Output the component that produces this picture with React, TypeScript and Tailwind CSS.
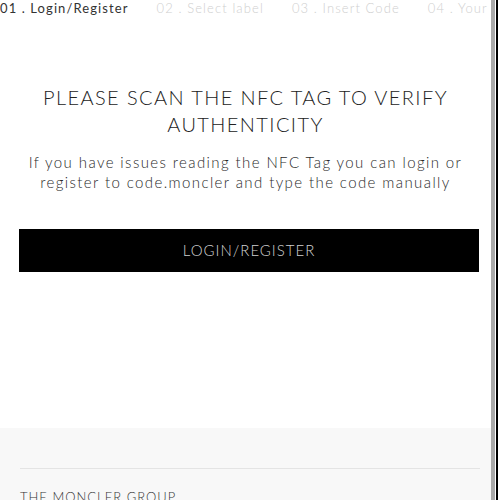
export default function App() {
  const steps = ['01 . Login/Register', '02 . Select label', '03 . Insert Code', '04 . Your code'];

  return (
    <div className="h-[500px] w-[500px] overflow-hidden bg-white flex font-['Lato',sans-serif] font-light text-[#222]">
      <div className="w-[491px] shrink-0 flex flex-col overflow-hidden">
        {/* Steps */}
        <div className="h-[16px] shrink-0 flex gap-[28px] whitespace-nowrap overflow-hidden text-[13px] tracking-[1.1px] leading-[16px]">
          {steps.map((s, i) => (
            <span key={s} className={i === 0 ? 'text-[#333] font-normal' : 'text-[#cfcfcf]'}>
              {s}
            </span>
          ))}
        </div>

        {/* Main */}
        <div className="h-[412px] shrink-0 flex flex-col items-center pt-[68px]">
          <h1 className="text-center text-[20px] leading-[27px] tracking-[1.4px] uppercase text-[#222] whitespace-nowrap">
            Please scan the NFC tag to verify
            <br />
            authenticity
          </h1>
          <p className="mt-[14px] text-center text-[15px] leading-[20px] tracking-[1.4px] text-[#2a2a2a] whitespace-nowrap">
            If you have issues reading the NFC Tag you can login or
            <br />
            register to code.moncler and type the code manually
          </p>
          <button className="mt-[37px] self-start ml-[19px] w-[460px] h-[43px] bg-black text-[#d0d0d0] text-[15px] tracking-[1px] uppercase">
            Login/Register
          </button>
        </div>

        {/* Footer */}
        <div className="flex-1 bg-[#f8f8f8] px-[20px] pt-[40px]">
          <div className="h-px bg-[#e4e4e4] w-[460px]" />
          <div className="mt-[19px] text-[13px] tracking-[1px] text-[#333] uppercase">The Moncler Group</div>
        </div>
      </div>

      {/* scrollbar */}
      <div className="w-[4px] bg-[#a9a9a9]" />
      <div className="w-[1px]" />
      <div className="w-[2px] bg-black" />
    </div>
  );
}
